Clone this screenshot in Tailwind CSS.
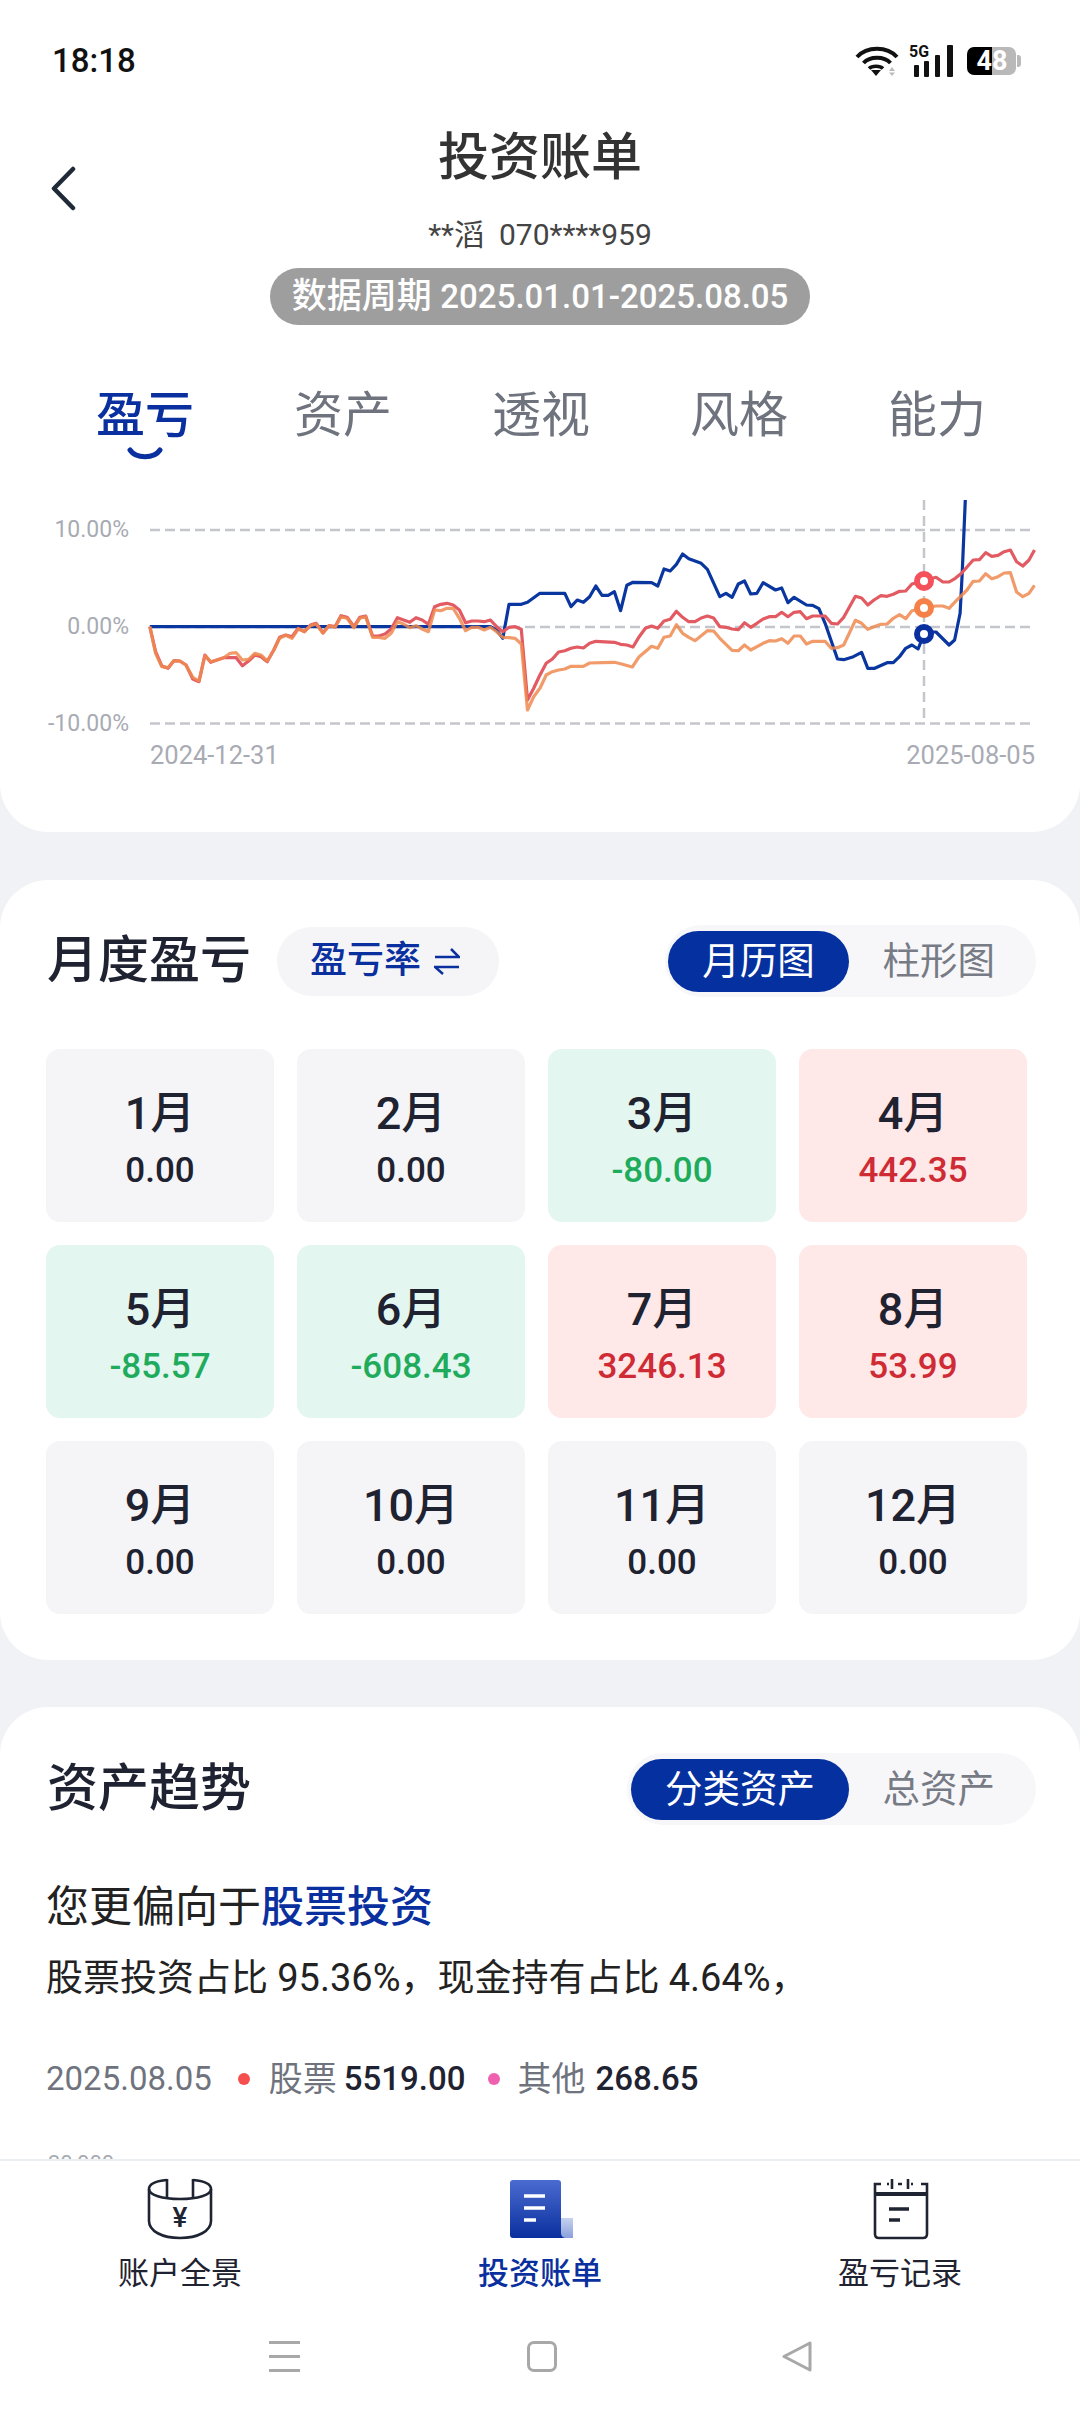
<!DOCTYPE html>
<html lang="zh-CN">
<head>
  <meta charset="UTF-8" />
  <title>投资账单</title>
  <script src="https://cdn.jsdelivr.net/npm/@tailwindcss/browser@4"></script>
</head>
<body class="bg-[#f0f2f6] font-[Roboto,'Noto_Sans_CJK_SC',sans-serif] text-[#1f2230]">
<div class="w-[1080px] h-[2412px] flex flex-col overflow-hidden">

  <div class="flex-1 min-h-0 overflow-hidden">
    <!-- top card -->
    <section class="bg-white rounded-b-[48px] h-[832px]">
      <div class="h-[120px] pt-[2px] px-[52px] flex items-center justify-between">
        <span class="text-[33px] font-medium text-[#111]">18:18</span>
        <div class="flex items-center mr-[7px]">
          <svg class="w-[44px] h-[30px]" viewBox="0 0 44 30" fill="none" stroke="#111">
            <path d="M2 11C12 0 32 0 42 11" stroke-width="4"/>
            <path d="M8.5 17C15 10 29 10 35.500 17" stroke-width="4"/>
            <path d="M14 22.500C17 19.500 25 19.500 28 22.500" stroke-width="3.500"/>
            <path d="M16 24H26L21 30Z" fill="#111" stroke="none"/>
            <path d="M37 21l3 4h-6zM37 30l-3-3.500h6z" fill="#bbb" stroke="none"/>
          </svg>
          <svg class="w-[46px] h-[32px] ml-[10px] overflow-visible" viewBox="0 0 46 32">
            <text x="0" y="12" font-size="16" font-weight="700" textLength="20" lengthAdjust="spacingAndGlyphs" fill="#111">5G</text>
            <rect x="5" y="20" width="5" height="12" rx="1" fill="#111"/>
            <rect x="15" y="16" width="5" height="16" rx="1" fill="#111"/>
            <rect x="26" y="10" width="5" height="22" rx="1" fill="#111"/>
            <rect x="38" y="0" width="6" height="32" rx="1" fill="#111"/>
          </svg>
          <div class="flex items-center ml-[12px] text-white text-[27px] font-bold leading-[28px]">
            <span class="w-[25px] h-[28px] bg-black rounded-l-[7px] text-right">4</span>
            <span class="w-[24px] h-[28px] bg-[#b9b9b9] rounded-r-[7px] text-left">8</span>
            <span class="w-[4px] h-[12px] bg-[#b9b9b9] rounded-r-[3px] ml-[1px]"></span>
          </div>
        </div>
      </div>

      <header class="relative flex flex-col items-center">
        <svg class="absolute left-[50px] top-[46px] w-[26px] h-[45px]" viewBox="0 0 26 45" fill="none" stroke="#1f2937" stroke-width="4.500" stroke-linecap="round" stroke-linejoin="round">
          <path d="M23 3L4 22.500L23 42"/>
        </svg>
        <h1 class="h-[74px] leading-[76px] text-[51px] font-medium text-[#333]">投资账单</h1>
        <p class="mt-[16px] h-[50px] leading-[50px] text-[30px] text-[#444]">**滔&nbsp; 070****959</p>
        <p class="mt-[8px] w-[540px] h-[57px] rounded-full bg-[#9e9e9e] text-white text-[35px] leading-[57px] text-center font-medium">数据周期 <span class="text-[33px]">2025.01.01-2025.08.05</span></p>
      </header>

      <nav class="mt-[60px] h-[60px] grid grid-cols-[repeat(5,198px)] pl-[46px] text-[49px] leading-[62px] text-center text-[#6f737e]">
        <div class="relative text-[#0a2f9e] font-medium">盈亏
          <svg class="absolute left-[81px] top-[62px] w-[36px] h-[14px]" viewBox="0 0 36 14" fill="none" stroke="#0a2f9e" stroke-width="5" stroke-linecap="round"><path d="M3 3C9 12 27 12 33 3"/></svg>
        </div>
        <div>资产</div>
        <div>透视</div>
        <div>风格</div>
        <div>能力</div>
      </nav>

      <svg id="chart" class="block mt-[45px] w-[1080px] h-[300px]" viewBox="0 490 1080 300" fill="none">
        <g stroke="#c4c6cb" stroke-width="2.500" stroke-dasharray="10 5">
          <path d="M150 530H1032"/>
          <path d="M150 627H1032"/>
          <path d="M150 723.500H1032"/>
          <path d="M924 500V723" stroke-dasharray="10 6"/>
        </g>
        <g font-size="23" fill="#a8abb3" text-anchor="end">
          <text x="129" y="537">10.00%</text>
          <text x="129" y="634">0.00%</text>
          <text x="129" y="731">-10.00%</text>
        </g>
        <g font-size="25.500" fill="#a8abb3">
          <text x="150" y="764">2024-12-31</text>
          <text x="1035" y="764" text-anchor="end">2025-08-05</text>
        </g>
        <polyline id="line-blue" stroke="#0a36a0" stroke-width="3.200" stroke-linejoin="round"/>
        <polyline id="line-red" stroke="#e25a62" stroke-width="3.200" stroke-linejoin="round"/>
        <polyline id="line-orange" stroke="#ee8a50" stroke-width="3.200" stroke-opacity="0.85" stroke-linejoin="round"/>
        <g fill="#fff" stroke-width="6">
          <circle cx="924" cy="581" r="7" stroke="#f4515a"/>
          <circle cx="924" cy="608" r="7" stroke="#f58148"/>
          <circle cx="924" cy="634" r="7" stroke="#0a2f9e"/>
        </g>
      </svg>
    </section>

    <!-- monthly -->
    <section class="mt-[48px] bg-white rounded-[48px] h-[780px] pl-[46px] pr-[44px] pt-[45px]">
      <div class="flex items-center justify-between h-[72px]">
        <div class="flex items-center">
          <h2 class="ml-[1px] text-[51px] font-medium leading-[74px]">月度盈亏</h2>
          <div class="ml-[26px] w-[222px] h-[69px] rounded-full bg-[#f5f5f7] flex items-center pl-[33px] text-[37px] font-medium text-[#0a2f9e]">盈亏率
            <svg class="ml-[13px] w-[26px] h-[27px]" viewBox="0 0 26 27" fill="none" stroke="#0a2f9e" stroke-width="2.500"><path d="M1 9H25L17 1"/><path d="M25 19H1L9 26"/></svg>
          </div>
        </div>
        <div class="w-[371px] h-[72px] rounded-full bg-[#f7f7f9] flex items-center justify-between pl-[3px] pr-[41px] text-[37.500px] text-[#777b85]">
          <span class="w-[181px] h-[61px] rounded-full bg-[#0530a0] text-white text-center leading-[61px]">月历图</span>
          <span>柱形图</span>
        </div>
      </div>
      <div class="mt-[52px] grid grid-cols-[repeat(4,228px)] gap-[23px] text-center">
        <div class="h-[173px] rounded-[14px] bg-[#f5f5f7] pt-[41px]"><p class="text-[45px] font-medium leading-[48px]">1月</p><p class="mt-[13px] text-[35px] font-medium leading-[40px]">0.00</p></div>
        <div class="h-[173px] rounded-[14px] bg-[#f5f5f7] pt-[41px]"><p class="text-[45px] font-medium leading-[48px]">2月</p><p class="mt-[13px] text-[35px] font-medium leading-[40px]">0.00</p></div>
        <div class="h-[173px] rounded-[14px] bg-[#e3f6ef] pt-[41px]"><p class="text-[45px] font-medium leading-[48px]">3月</p><p class="mt-[13px] text-[35px] font-medium leading-[40px] text-[#1fab5c]">-80.00</p></div>
        <div class="h-[173px] rounded-[14px] bg-[#ffe8e8] pt-[41px]"><p class="text-[45px] font-medium leading-[48px]">4月</p><p class="mt-[13px] text-[35px] font-medium leading-[40px] text-[#cf2b35]">442.35</p></div>
        <div class="h-[173px] rounded-[14px] bg-[#e3f6ef] pt-[41px]"><p class="text-[45px] font-medium leading-[48px]">5月</p><p class="mt-[13px] text-[35px] font-medium leading-[40px] text-[#1fab5c]">-85.57</p></div>
        <div class="h-[173px] rounded-[14px] bg-[#e3f6ef] pt-[41px]"><p class="text-[45px] font-medium leading-[48px]">6月</p><p class="mt-[13px] text-[35px] font-medium leading-[40px] text-[#1fab5c]">-608.43</p></div>
        <div class="h-[173px] rounded-[14px] bg-[#ffe8e8] pt-[41px]"><p class="text-[45px] font-medium leading-[48px]">7月</p><p class="mt-[13px] text-[35px] font-medium leading-[40px] text-[#cf2b35]">3246.13</p></div>
        <div class="h-[173px] rounded-[14px] bg-[#ffe8e8] pt-[41px]"><p class="text-[45px] font-medium leading-[48px]">8月</p><p class="mt-[13px] text-[35px] font-medium leading-[40px] text-[#cf2b35]">53.99</p></div>
        <div class="h-[173px] rounded-[14px] bg-[#f5f5f7] pt-[41px]"><p class="text-[45px] font-medium leading-[48px]">9月</p><p class="mt-[13px] text-[35px] font-medium leading-[40px]">0.00</p></div>
        <div class="h-[173px] rounded-[14px] bg-[#f5f5f7] pt-[41px]"><p class="text-[45px] font-medium leading-[48px]">10月</p><p class="mt-[13px] text-[35px] font-medium leading-[40px]">0.00</p></div>
        <div class="h-[173px] rounded-[14px] bg-[#f5f5f7] pt-[41px]"><p class="text-[45px] font-medium leading-[48px]">11月</p><p class="mt-[13px] text-[35px] font-medium leading-[40px]">0.00</p></div>
        <div class="h-[173px] rounded-[14px] bg-[#f5f5f7] pt-[41px]"><p class="text-[45px] font-medium leading-[48px]">12月</p><p class="mt-[13px] text-[35px] font-medium leading-[40px]">0.00</p></div>
      </div>
    </section>

    <!-- asset trend -->
    <section class="mt-[47px] bg-white rounded-t-[48px] h-[600px] pl-[46px] pr-[44px] pt-[46px]">
      <div class="flex items-center justify-between h-[72px]">
        <h2 class="ml-[1px] text-[51px] font-medium leading-[74px]">资产趋势</h2>
        <div class="w-[409px] h-[72px] rounded-full bg-[#f7f7f9] flex items-center justify-between pl-[4px] pr-[41px] text-[37.500px] text-[#777b85]">
          <span class="w-[218px] h-[61px] rounded-full bg-[#0530a0] text-white text-center leading-[61px]">分类资产</span>
          <span>总资产</span>
        </div>
      </div>
      <p class="mt-[52px] h-[60px] leading-[60px] text-[43px] text-[#222]">您更偏向于<span class="text-[#0a2f9e] font-medium">股票投资</span></p>
      <p class="mt-[16px] h-[50px] leading-[50px] text-[37px] text-[#222]">股票投资占比 <span class="text-[38px]">95.36%</span>，现金持有占比 <span class="text-[38px]">4.64%</span>，</p>
      <div class="mt-[51px] h-[50px] flex items-center text-[34px] text-[#6f737e]">
        <span class="text-[33px]">2025.08.05</span>
        <span class="ml-[26px] w-[12px] h-[12px] rounded-full bg-[#f5504e]"></span>
        <span class="ml-[19px]">股票</span>
        <span class="ml-[7px] text-[33px] font-medium text-[#1f2230]">5519.00</span>
        <span class="ml-[22px] w-[12px] h-[12px] rounded-full bg-[#f060b0]"></span>
        <span class="ml-[18px]">其他</span>
        <span class="ml-[10px] text-[33px] font-medium text-[#1f2230]">268.65</span>
      </div>
      <p class="mt-[47px] ml-[2px] text-[22px] leading-[26px] text-[#a8abb3]">30,000</p>
    </section>
  </div>

  <!-- bottom tabs -->
  <footer class="shrink-0 h-[253px] bg-white border-t-2 border-[#eceff1]">
    <div class="grid grid-cols-3 h-[138px] pt-[17px] text-center text-[31px] leading-[40px]">
      <a class="flex flex-col items-center">
        <svg class="w-[66px] h-[62px]" viewBox="0 0 66 62" fill="none" stroke="#1f2433" stroke-width="2.600">
          <path d="M2 11V43C2 53 15 60 33 60C51 60 64 53 64 43V11"/>
          <path d="M20 2C9 3 2 6 2 11C2 17 15 21 33 21C51 21 64 17 64 11C64 6 57 3 46 2"/>
          <path d="M20 1V20M46 1V20"/>
          <text x="33" y="49" font-size="28" font-weight="500" fill="#1f2433" stroke="none" text-anchor="middle">¥</text>
        </svg>
        <span class="mt-[14px]">账户全景</span>
      </a>
      <a class="flex flex-col items-center text-[#0a2f9e] font-medium">
        <svg class="w-[66px] h-[62px]" viewBox="0 0 66 62" fill="none">
          <defs>
            <linearGradient id="doc" x1="0" y1="0" x2="0" y2="1"><stop offset="0" stop-color="#4a6bd0"/><stop offset="1" stop-color="#0a2f9e"/></linearGradient>
            <linearGradient id="curl" x1="0" y1="0" x2="0" y2="1"><stop offset="0" stop-color="#c6d2ef"/><stop offset="1" stop-color="#8aa0dc"/></linearGradient>
          </defs>
          <path d="M44 40H66V60H54Q44 58 44 50Z" fill="url(#curl)"/>
          <path d="M3 5Q3 2 6 2H51Q54 2 54 5V55Q54 59 58 60H6Q3 60 3 57Z" fill="url(#doc)"/>
          <path d="M17 18H38M17 30H38M17 42H29" stroke="#fff" stroke-width="3.500"/>
        </svg>
        <span class="mt-[14px]">投资账单</span>
      </a>
      <a class="flex flex-col items-center">
        <svg class="w-[66px] h-[62px]" viewBox="0 0 66 62" fill="none" stroke="#1f2433" stroke-width="2.600">
          <path d="M14 6H8V56Q8 60 12 60H56Q60 60 60 56V6H54"/>
          <path d="M20 6H22M31 6H35M44 6H46"/>
          <path d="M25 1V11M41 1V11"/>
          <path d="M8 16H60" stroke-width="4"/>
          <path d="M22 31H42M22 42H33" stroke-width="3.500"/>
        </svg>
        <span class="mt-[14px]">盈亏记录</span>
      </a>
    </div>
    <div class="mt-[41px] flex items-center justify-center h-[32px]">
      <div class="w-[31px] h-[31px] flex flex-col justify-between">
        <span class="block h-[3px] bg-[#a8a8a8]"></span>
        <span class="block h-[3px] bg-[#a8a8a8]"></span>
        <span class="block h-[3px] bg-[#a8a8a8]"></span>
      </div>
      <div class="ml-[227px] w-[30px] h-[31px] rounded-[7px] border-[3px] border-[#a8a8a8]"></div>
      <svg class="ml-[225px] w-[30px] h-[31px]" viewBox="0 0 30 31" fill="none" stroke="#a8a8a8" stroke-width="3" stroke-linejoin="round"><path d="M28 2V29L2 15.500Z"/></svg>
    </div>
  </footer>
</div>

<script>
  // points read off the reference, in zoomed crop units
  const left = {
    blue: [[435,440],[1424,440],[1442,450],[1460,475],[1478,373],[1514,373],[1532,367],[1568,340]],
    red: [[435,440],[452,515],[470,558],[488,565],[505,542],[522,543],[540,555],[560,597],[578,605],[595,525],[612,547],[630,540],[650,533],[686,533],[704,557],[722,543],[740,525],[758,530],[776,545],[795,510],[812,472],[830,465],[848,470],[866,445],[884,455],[902,435],[918,430],[938,458],[955,437],[973,440],[990,407],[1008,412],[1028,440],[1045,412],[1062,408],[1082,468],[1100,468],[1118,462],[1136,447],[1154,413],[1172,420],[1190,427],[1208,413],[1226,420],[1244,433],[1262,380],[1280,373],[1298,370],[1316,375],[1334,390],[1352,428],[1370,423],[1388,423],[1406,425],[1424,420],[1442,440],[1460,455],[1478,442],[1496,440],[1514,448],[1532,660],[1550,625],[1568,585]],
    orange: [[435,440],[452,520],[470,560],[488,563],[505,542],[522,543],[540,555],[560,592],[578,603],[595,527],[612,545],[630,540],[650,533],[668,520],[686,518],[704,540],[722,538],[740,520],[758,525],[776,543],[795,510],[812,475],[830,466],[848,475],[866,447],[884,455],[902,437],[918,432],[938,460],[955,437],[973,442],[990,410],[1008,415],[1028,443],[1045,415],[1062,410],[1082,472],[1100,472],[1118,475],[1136,460],[1154,425],[1172,432],[1190,443],[1208,437],[1226,447],[1244,455],[1262,390],[1280,392],[1298,385],[1316,385],[1334,415],[1352,452],[1370,442],[1388,442],[1406,450],[1424,442],[1442,455],[1460,472],[1478,473],[1496,475],[1514,492],[1532,690],[1550,650],[1568,625]]
  };
  const right = {
    blue: [[0,340],[72,340],[90,380],[108,360],[126,367],[144,350],[162,318],[180,346],[198,346],[216,335],[234,392],[252,316],[270,307],[324,308],[342,318],[360,267],[378,273],[396,253],[414,222],[432,236],[468,250],[486,268],[522,350],[540,340],[558,352],[576,312],[594,303],[612,342],[630,340],[648,308],[684,330],[702,324],[720,368],[738,352],[774,375],[792,376],[810,386],[828,430],[864,537],[882,539],[910,530],[934,517],[952,565],[972,565],[1008,548],[1026,548],[1044,530],[1062,505],[1080,495],[1098,507],[1116,460],[1134,456],[1150,456],[1188,495],[1204,480],[1220,400],[1226,280],[1235,60]],
    red: [[0,585],[18,550],[36,537],[54,516],[72,512],[90,505],[108,501],[126,504],[144,490],[162,484],[216,487],[234,493],[252,495],[270,501],[288,470],[306,445],[324,438],[342,445],[360,423],[378,418],[396,394],[414,412],[432,425],[450,425],[468,414],[486,408],[504,414],[522,440],[540,442],[558,447],[576,449],[594,428],[612,442],[630,430],[648,417],[666,410],[684,410],[702,397],[720,410],[738,397],[756,395],[774,416],[792,408],[828,408],[846,430],[864,432],[882,412],[916,349],[934,354],[952,375],[970,360],[990,347],[1008,349],[1026,343],[1044,334],[1062,333],[1080,312],[1116,302],[1150,292],[1170,306],[1188,306],[1206,295],[1224,280],[1258,240],[1276,239],[1294,218],[1312,229],[1330,226],[1348,215],[1366,210],[1384,245],[1402,258],[1420,240],[1436,210]],
    orange: [[0,625],[18,585],[36,575],[54,570],[72,567],[90,559],[126,559],[144,549],[180,548],[216,547],[234,551],[268,561],[288,530],[324,499],[342,505],[360,472],[378,468],[396,434],[414,460],[432,472],[450,482],[468,467],[486,452],[504,453],[522,475],[558,511],[576,512],[594,495],[612,510],[648,490],[666,482],[684,483],[702,476],[720,490],[738,468],[756,468],[774,492],[792,484],[828,484],[846,505],[864,503],[882,495],[916,421],[934,430],[952,448],[970,440],[990,433],[1008,432],[1026,415],[1044,404],[1062,416],[1080,392],[1116,384],[1150,378],[1170,378],[1188,385],[1206,365],[1240,330],[1258,304],[1276,303],[1294,281],[1312,296],[1330,290],[1348,279],[1366,278],[1384,336],[1402,350],[1420,340],[1436,316]]
  };
  for (const name of ["blue", "red", "orange"]) {
    const pts = [
      ...left[name].map(([x, y]) => [x / 2.904, 480 + y / 3]),
      ...right[name].map(([x, y]) => [540 + x / 2.904, 480 + y / 3])
    ];
    document.getElementById("line-" + name).setAttribute("points", pts.map(p => p[0].toFixed(1) + "," + p[1].toFixed(1)).join(" "));
  }
</script>
</body>
</html>
